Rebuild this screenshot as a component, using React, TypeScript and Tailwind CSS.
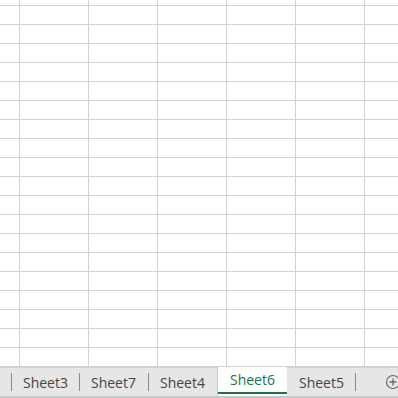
import React from "react";

const rows = Array.from({ length: 20 });
const cols = Array.from({ length: 7 });

const tabs = [
  { name: "Sheet3", w: "w-[68px]" },
  { name: "Sheet7", w: "w-[69px]" },
  { name: "Sheet4", w: "w-[69px]" },
  { name: "Sheet6", w: "w-[70px]" },
  { name: "Sheet5", w: "w-[68px]" },
];

function Grid() {
  return (
    <div className="relative flex-1 overflow-hidden bg-white">
      <div className="-mt-[13px] -ml-[49px] flex flex-col">
        {rows.map((_, r) => (
          <div key={r} className="flex h-[19px] shrink-0">
            {cols.map((_, c) => (
              <div
                key={c}
                className="h-[19px] w-[69px] shrink-0 border-r border-b border-[#d2d2d2]"
              />
            ))}
          </div>
        ))}
      </div>
    </div>
  );
}

function PlusButton() {
  return (
    <svg width="16" height="16" viewBox="0 0 16 16" className="shrink-0">
      <circle cx="8" cy="8" r="6.5" fill="none" stroke="#6b6b6b" strokeWidth="1.2" />
      <path d="M8 4.5v7M4.5 8h7" stroke="#6b6b6b" strokeWidth="1.3" />
    </svg>
  );
}

export default function App() {
  return (
    <div
      className="flex h-[398px] w-[398px] flex-col overflow-hidden bg-white"
      style={{ fontFamily: '"Open Sans", "Noto Sans", sans-serif' }}
    >
      <Grid />
      <div className="flex h-[31px] shrink-0 items-stretch border-t border-[#d0d0d0] border-b-2 border-b-[#c8c8c8] bg-[#e6e6e6]">
        <div className="w-[11px] shrink-0" />
        {tabs.map((t, i) => {
          if (t.name === "Sheet6") {
            return (
              <div
                key={t.name}
                className={`-mt-px flex ${t.w} shrink-0 flex-col border-l border-[#c6c6c6] bg-white`}
              >
                <div className="flex flex-1 items-center pl-[12px] text-[14px] text-[#217346]">
                  {t.name}
                </div>
                <div className="h-[2px] bg-[#217346]" />
                <div className="h-[2px]" />
              </div>
            );
          }
          const afterActive = i > 0 && tabs[i - 1].name === "Sheet6";
          return (
            <div key={t.name} className={`flex ${t.w} shrink-0 items-center`}>
              <div className={afterActive ? "w-px" : "h-[18px] w-px bg-[#8a8a8a]"} />
              <span className="pl-[11px] text-[14px] text-[#444444]">{t.name}</span>
            </div>
          );
        })}
        <div className="flex flex-1 items-center">
          <div className="h-[18px] w-px bg-[#8a8a8a]" />
          <div className="flex-1" />
          <div className="-mr-[3px]">
            <PlusButton />
          </div>
        </div>
      </div>
    </div>
  );
}
